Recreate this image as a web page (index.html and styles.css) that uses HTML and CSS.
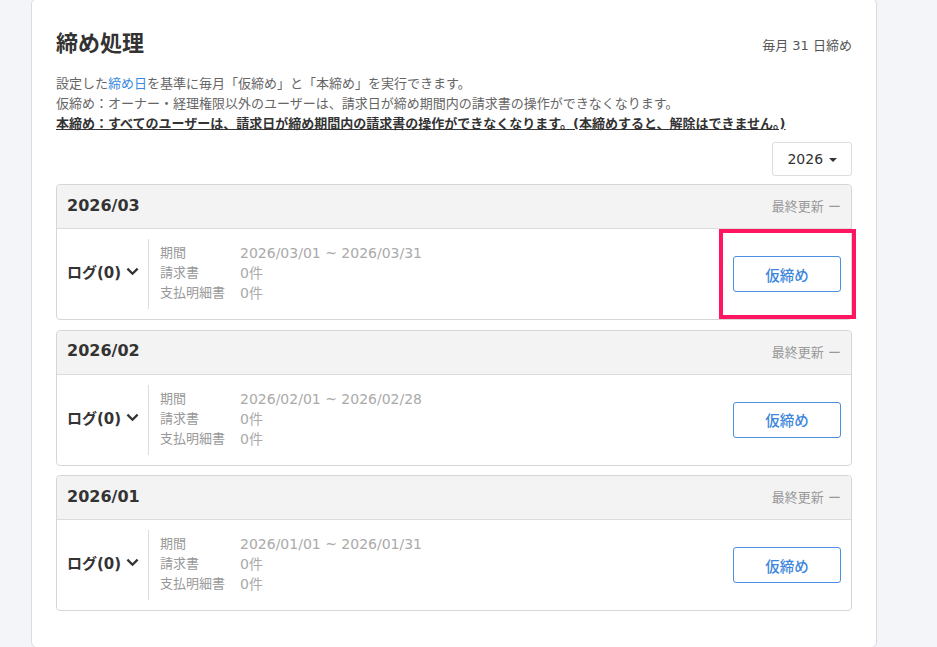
FILE: index.html
```html
<!DOCTYPE html>
<html lang="ja">
<head>
    <meta charset="UTF-8">
    <meta name="viewport" content="width=device-width, initial-scale=1.0">
    <title>締め処理</title>
    <link rel="stylesheet" href="styles.css">
</head>
<body>
    <div class="panel">
        <div class="panel-head">
            <h2>締め処理</h2>
            <span class="closing-day">毎月 31 日締め</span>
        </div>
        <div class="desc">
            <p>設定した<a href="#">締め日</a>を基準に毎月「仮締め」と「本締め」を実行できます。</p>
            <p>仮締め：オーナー・経理権限以外のユーザーは、請求日が締め期間内の請求書の操作ができなくなります。</p>
            <p class="warn">本締め：すべてのユーザーは、請求日が締め期間内の請求書の操作ができなくなります。(本締めすると、解除はできません。)</p>
        </div>

        <div class="year-row">
            <button class="year-select">2026 <span class="caret"></span></button>
        </div>

        <div class="month-list">
            <div class="month-card">
                <div class="month-head">
                    <span class="month-title">2026/03</span>
                    <span class="updated">最終更新 ー</span>
                </div>
                <div class="month-body">
                    <div class="log">ログ(0)
                        <svg width="13" height="9" viewBox="0 0 13 9"><path d="M1.4 1.6 L6.5 6.7 L11.6 1.6" fill="none" stroke="#333" stroke-width="2.3"/></svg>
                    </div>
                    <dl class="info">
                        <dt>期間</dt><dd>2026/03/01 ~ 2026/03/31</dd>
                        <dt>請求書</dt><dd>0件</dd>
                        <dt>支払明細書</dt><dd>0件</dd>
                    </dl>
                    <button class="close-btn">仮締め</button>
                    <div class="highlight"></div>
                </div>
            </div>

            <div class="month-card">
                <div class="month-head">
                    <span class="month-title">2026/02</span>
                    <span class="updated">最終更新 ー</span>
                </div>
                <div class="month-body">
                    <div class="log">ログ(0)
                        <svg width="13" height="9" viewBox="0 0 13 9"><path d="M1.4 1.6 L6.5 6.7 L11.6 1.6" fill="none" stroke="#333" stroke-width="2.3"/></svg>
                    </div>
                    <dl class="info">
                        <dt>期間</dt><dd>2026/02/01 ~ 2026/02/28</dd>
                        <dt>請求書</dt><dd>0件</dd>
                        <dt>支払明細書</dt><dd>0件</dd>
                    </dl>
                    <button class="close-btn">仮締め</button>
                </div>
            </div>

            <div class="month-card">
                <div class="month-head">
                    <span class="month-title">2026/01</span>
                    <span class="updated">最終更新 ー</span>
                </div>
                <div class="month-body">
                    <div class="log">ログ(0)
                        <svg width="13" height="9" viewBox="0 0 13 9"><path d="M1.4 1.6 L6.5 6.7 L11.6 1.6" fill="none" stroke="#333" stroke-width="2.3"/></svg>
                    </div>
                    <dl class="info">
                        <dt>期間</dt><dd>2026/01/01 ~ 2026/01/31</dd>
                        <dt>請求書</dt><dd>0件</dd>
                        <dt>支払明細書</dt><dd>0件</dd>
                    </dl>
                    <button class="close-btn">仮締め</button>
                </div>
            </div>
        </div>
    </div>
</body>
</html>
```

FILE: styles.css
```css
body { margin: 0; background: #f4f5f9; font-family: "DejaVu Sans", "Noto Sans CJK JP", sans-serif; color: #333; }
.panel { margin: -2px 0 0 31px; width: 846px; box-sizing: border-box; background: #fff; border: 1px solid #dcdcdc; border-radius: 6px; padding: 24px 24px 36px; }
.panel-head { display: flex; justify-content: space-between; align-items: center; height: 36px; }
.panel-head h2 { margin: 0; font-size: 22px; font-weight: bold; color: #333; }
.closing-day { font-size: 13px; color: #555; margin-top: 6px; }
.desc { margin-top: 15px; font-size: 13px; line-height: 20px; color: #666; }
.desc p { margin: 0; }
.desc a { color: #3a8ae0; text-decoration: none; }
.desc .warn { color: #333; font-weight: bold; text-decoration: underline; }
.year-row { display: flex; justify-content: flex-end; margin-top: 8px; }
.year-select { width: 80px; height: 34px; background: #fff; border: 1px solid #ddd; border-radius: 3px; font-family: inherit; font-size: 14px; color: #333; padding: 0; }
.caret { display: inline-block; width: 0; height: 0; border-left: 4px solid transparent; border-right: 4px solid transparent; border-top: 4px solid #333; vertical-align: middle; margin-left: 1px; }
.month-list { margin-top: 8px; display: flex; flex-direction: column; gap: 9.5px; }
.month-card { border: 1px solid #d6d6d6; border-radius: 4px; }
.month-head { display: flex; justify-content: space-between; align-items: center; height: 43px; padding: 0 10px; background: #f3f3f3; border-bottom: 1px solid #dcdcdc; border-radius: 4px 4px 0 0; }
.month-title { font-size: 16px; font-weight: bold; color: #333; padding-bottom: 3px; }
.updated { font-size: 13px; color: #999; padding-bottom: 2px; }
.month-body { position: relative; display: flex; align-items: center; padding: 10px; }
.log { width: 81px; flex-shrink: 0; font-size: 15px; font-weight: bold; color: #333; display: flex; align-items: center; gap: 5px; padding-bottom: 5px; }
.info { margin: 0; border-left: 1px solid #ddd; padding: 4px 0 6px 11px; display: grid; grid-template-columns: 80px auto; font-size: 13px; line-height: 20px; }
.info dt { color: #999; }
.info dd { margin: 0; color: #aaa; font-size: 14px; }
.close-btn { margin-left: auto; width: 108px; height: 36px; background: #fff; border: 1px solid #4a8fe0; border-radius: 3px; color: #3c86dc; font-family: inherit; font-size: 14.5px; font-weight: 500; }
.highlight { position: absolute; top: 0; bottom: 0; right: -5px; width: 137px; box-sizing: border-box; border: 4.5px solid #ff1560; }
```
